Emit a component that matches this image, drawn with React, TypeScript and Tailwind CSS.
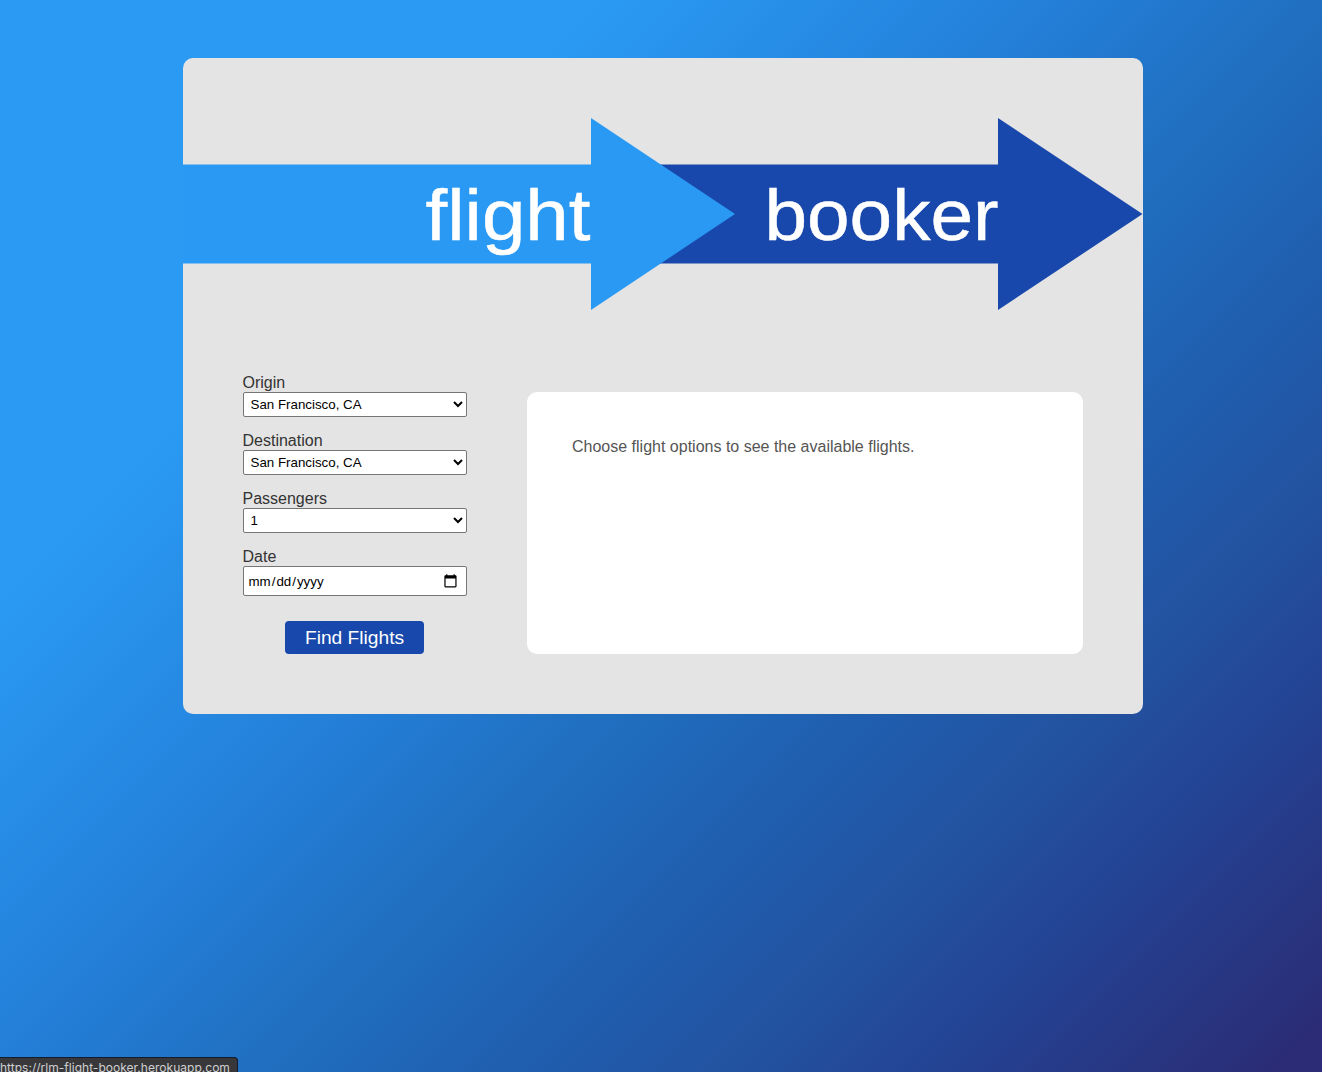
import React from "react";

const field = "block w-[224px] rounded-[2px] border border-[#767676] bg-white text-[13.333px] text-black";

function SelectField({ label, options }: { label: string; options: string[] }) {
  return (
    <label className="mb-[14px] block text-base leading-[18px] text-[#333]">
      <span className="-ml-[0.5px] block pt-px">{label}</span>
      <select className={`${field} h-[25px] pl-[2.5px] pr-[3px] leading-normal`}>
        {options.map((o) => (
          <option key={o}>{o}</option>
        ))}
      </select>
    </label>
  );
}

function Logo() {
  return (
    <svg width="960" height="192" viewBox="0 0 960 192" className="block" fontFamily="'Liberation Sans', Arial, sans-serif">
      <path d="M470 46.5H815V0L959.5 96L815 192V145.5H470Z" fill="#1848ab" />
      <path d="M0 46.5H408V0L552 96L408 192V145.5H0Z" fill="#2a99f3" />
      <g fill="#fff" stroke="#fff" strokeWidth="0.5" fontSize="71.5">
        <text x="242.5" y="121.5" textLength="165" lengthAdjust="spacingAndGlyphs">flight</text>
        <text x="581.5" y="121.5" textLength="234" lengthAdjust="spacingAndGlyphs">booker</text>
      </g>
    </svg>
  );
}

export default function App() {
  return (
    <div className="relative h-screen overflow-hidden bg-[linear-gradient(135deg,#2a9af3_25%,#2482dc_42%,#206ebf_56%,#205eaf_66%,#2253a1_75%,#244191_85%,#2b2c75_98%)] pt-[58px] font-['Liberation_Sans',Arial,sans-serif]">
      <main className="ml-[183px] h-[656px] w-[960px] rounded-[10px] bg-[#e4e4e4] pt-[60px]">
        <Logo />
        <div className="mt-[63px] flex pl-[60px]">
          <form className="w-[224px]">
            <SelectField label="Origin" options={["San Francisco, CA"]} />
            <SelectField label="Destination" options={["San Francisco, CA"]} />
            <SelectField label="Passengers" options={["1"]} />
            <label className="block text-base leading-[18px] text-[#333]">
              <span className="-ml-[0.5px] block pt-px">Date</span>
              <input
                type="date"
                className={`${field} h-[30px] pl-[3.5px] pr-[7px] pt-px [&::-webkit-calendar-picker-indicator]:scale-[1.22]`}
              />
            </label>
            <button type="button" className="ml-[42px] mt-[25px] block h-[33px] w-[139px] rounded-[4px] bg-[#1848ab] text-[19.2px] leading-[33px] text-white">
              Find Flights
            </button>
          </form>
          <section className="ml-[60px] mt-[19px] h-[262px] w-[556px] rounded-[10px] bg-white px-[45px] pt-[45px]">
            <p className="text-base leading-[20px] text-[#555]">Choose flight options to see the available flights.</p>
          </section>
        </div>
      </main>
      <div className="absolute left-0 top-[1057px] h-[20px] w-[238px] rounded-tr-[4px] border-r border-t border-[#111c2c] bg-[#38383b] pt-[2px] font-[Inter,sans-serif] text-[12.06px] leading-[15px] whitespace-nowrap text-[#cfcfcf]">
        https://rlm-flight-booker.herokuapp.com
      </div>
    </div>
  );
}
